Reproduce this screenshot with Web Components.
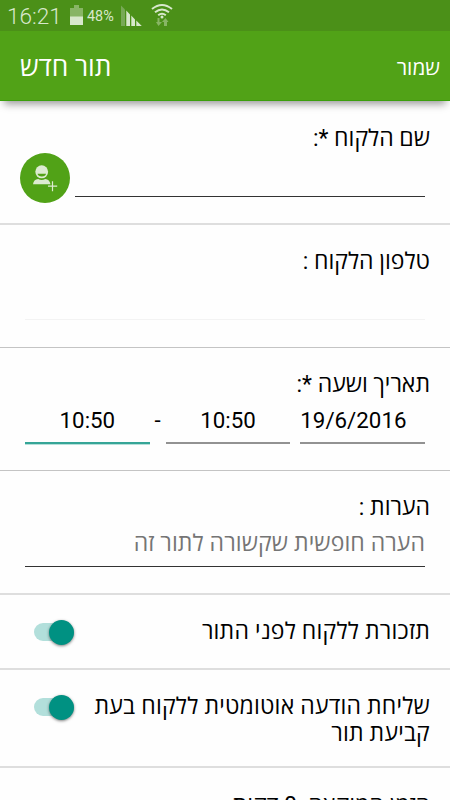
<!DOCTYPE html>
<html lang="he">
<head>
<meta charset="utf-8">
<title>תור חדש</title>
<style>
    body {
        margin: 0;
        width: 450px;
        height: 800px;
        overflow: hidden;
        background: #fefefe;
        color: #000;
        font-family: Roboto, "Open Sans", "Noto Sans", sans-serif;
        font-size: 23px;
    }
</style>
</head>
<body>
<appointment-form></appointment-form>
<script>
class StatusBar extends HTMLElement {
    constructor() {
        super();
        this.attachShadow({mode: 'open'}).innerHTML = `
        <style>
            :host {
                display: flex;
                align-items: center;
                height: 31px;
                padding-left: 7px;
                background: #4b9018;
                color: #d8e8cc;
            }
            .time { width: 63px; font-size: 22.600px; font-weight: 300; line-height: 31px; padding-top: 2px; }
            .percent { width: 34px; font-size: 14.400px; line-height: 33px; padding-top: 1px; }
            svg { display: block; }
            .battery { margin-right: 4px; }
            .wifi { margin-left: 9px; }
        </style>
        <span class="time">16:21</span>
        <svg class="battery" width="13" height="31" viewBox="0 0 13 31">
            <path d="M0 8h4V5h5v3h4v9H0z" fill="#88b565"/>
            <path d="M0 16.500h13V25H0z" fill="#d8e8cc"/>
        </svg>
        <span class="percent">48%</span>
        <svg width="21" height="31" viewBox="0 0 21 31">
            <path d="M0 5.500l4 4V26H0z" fill="#78a956"/>
            <path d="M5.300 10.500l3.700 4V26H5.300zM10.300 15.500l3.700 4V26h-3.700zM15.300 20.500l5.500 5.500h-5.500z" fill="#d8e8cc"/>
        </svg>
        <svg class="wifi" width="22" height="31" viewBox="0 0 22 31" fill="none" stroke="#d8e8cc" stroke-width="2">
            <path d="M1 9q10-8 20 0M4 12.300q7-5.500 14 0M7.200 15.300q3.800-3 7.600 0"/>
            <circle cx="11" cy="17" r="1.500" fill="#d8e8cc" stroke="none"/>
            <path d="M8.500 18v4H11l-3.500 4L5 22h1.500v-4zM13 26v-4h-2l3.500-4 3 4H16v4z" fill="#88b565" stroke="none"/>
        </svg>`;
    }
}

class ActionBar extends HTMLElement {
    constructor() {
        super();
        this.attachShadow({mode: 'open'}).innerHTML = `
        <style>
            :host {
                display: flex;
                justify-content: space-between;
                align-items: center;
                box-sizing: border-box;
                height: 70px;
                padding: 0 10px 0 20px;
                background: #51a217;
                border-bottom: 1px solid #3b9f0c;
                box-shadow: 0 7px 8px -4px rgba(0, 0, 0, .4);
                color: #fff;
                font-size: 26.300px;
            }
            .action { font-size: 20.800px; padding-top: 2px; }
        </style>
        <span dir="rtl"><slot></slot></span>
        <span class="action" dir="rtl"><slot name="action"></slot></span>`;
    }
}

class FormRow extends HTMLElement {
    constructor() {
        super();
        this.attachShadow({mode: 'open'}).innerHTML = `
        <style>
            :host {
                display: block;
                box-sizing: border-box;
                height: var(--row-height, 124px);
                padding: var(--row-top, 23px) 20px 0;
                border-bottom: 2px solid #dedede;
            }
            :host([thin]) { border-bottom: 1px solid #c4c4c4; }
            .label { line-height: 28px; }
        </style>
        <div class="label" dir="rtl">${this.getAttribute('label')}</div>
        <slot></slot>`;
    }
}

class TextField extends HTMLElement {
    constructor() {
        super();
        this.attachShadow({mode: 'open'}).innerHTML = `
        <style>
            :host {
                display: block;
                box-sizing: border-box;
                height: 44px;
                line-height: 27px;
                border-bottom: 1px solid var(--line, #333);
            }
        </style>
        <slot></slot>`;
    }
}

class ContactButton extends HTMLElement {
    constructor() {
        super();
        this.attachShadow({mode: 'open'}).innerHTML = `
        <style>
            :host { display: block; width: 50px; height: 50px; }
            svg { display: block; }
        </style>
        <svg width="50" height="50" viewBox="0 0 50 50">
            <circle cx="25" cy="25" r="25" fill="#51a217"/>
            <ellipse cx="21.700" cy="18.800" rx="6.400" ry="6.500" fill="#dcebd1"/>
            <path d="M17.500 20.800h8.500q-.5 2.700-4.200 2.700t-4.300-2.700z" fill="#51a217"/>
            <path d="M13 31.300q.5-4.800 5.200-5.300 3.500 1.800 7 0 4.500.5 5.300 5.300z" fill="#dcebd1"/>
            <path d="M32.500 28.200v10M28 33.200h9.200" stroke="#dcebd1" stroke-width="1.200"/>
        </svg>`;
    }
}

class ToggleSwitch extends HTMLElement {
    constructor() {
        super();
        this.attachShadow({mode: 'open'}).innerHTML = `
        <style>
            :host {
                display: flex;
                align-items: center;
                justify-content: flex-end;
                flex: none;
                width: 40px;
                height: 18px;
                border-radius: 9px;
                background: #b2dfdb;
            }
            .thumb {
                width: 25px;
                height: 25px;
                border-radius: 50%;
                background: #009182;
                box-shadow: 0 1px 3px rgba(0, 0, 0, .5);
            }
        </style>
        <div class="thumb"></div>`;
    }
}

class SwitchRow extends HTMLElement {
    constructor() {
        super();
        this.attachShadow({mode: 'open'}).innerHTML = `
        <style>
            :host {
                display: flex;
                justify-content: space-between;
                align-items: flex-start;
                box-sizing: border-box;
                height: var(--row-height, 75px);
                padding: 23px 20px 0 34px;
                border-bottom: 2px solid #dedede;
                line-height: 27px;
            }
            toggle-switch { margin-top: 5px; }
            .label { width: 342px; letter-spacing: .2px; }
        </style>
        <toggle-switch></toggle-switch>
        <div class="label" dir="rtl"><slot></slot></div>`;
    }
}

class AppointmentForm extends HTMLElement {
    constructor() {
        super();
        this.attachShadow({mode: 'open'}).innerHTML = `
        <style>
            :host { display: block; height: 800px; overflow: hidden; }
            action-bar { position: relative; }
            .name { display: flex; gap: 5px; margin-right: 5px; }
            .name text-field { flex: 1; }
            .phone { margin: 0 5px; --line: #f3f3f3; }
            .times { display: flex; margin: 0 5px; font-size: 22.300px; }
            .times text-field { width: 125px; height: 45px; padding-top: 8px; border-width: 2px; text-align: center; --line: #929292; }
            .times .active { --line: #35a597; box-shadow: 0 1px #b5e0da; }
            .dash { width: 16px; padding-top: 8px; text-align: center; line-height: 27px; }
            .times .date { margin-left: 10px; text-align: left; }
            .notes { height: 45px; margin: 0 5px; padding-top: 8px; color: #757575; letter-spacing: .1px; }
        </style>
        <status-bar></status-bar>
        <action-bar>תור חדש<span slot="action">שמור</span></action-bar>
        <form-row label="שם הלקוח *:" style="--row-top: 24px">
            <div class="name">
                <contact-button></contact-button>
                <text-field></text-field>
            </div>
        </form-row>
        <form-row label="טלפון הלקוח :" style="--row-height: 123px" thin>
            <text-field class="phone"></text-field>
        </form-row>
        <form-row label="תאריך ושעה *:" style="--row-height: 123px" thin>
            <div class="times">
                <text-field class="active">10:50</text-field>
                <span class="dash">-</span>
                <text-field>10:50</text-field>
                <text-field class="date">19/6/2016</text-field>
            </div>
        </form-row>
        <form-row label="הערות :">
            <text-field class="notes" dir="rtl">הערה חופשית שקשורה לתור זה</text-field>
        </form-row>
        <switch-row>תזכורת ללקוח לפני התור</switch-row>
        <switch-row style="--row-height: 98px">שליחת הודעה אוטומטית ללקוח בעת קביעת תור</switch-row>
        <form-row label="הזמן המוקצה :0 דקות" style="--row-top: 24px"></form-row>`;
    }
}

customElements.define('status-bar', StatusBar);
customElements.define('action-bar', ActionBar);
customElements.define('form-row', FormRow);
customElements.define('text-field', TextField);
customElements.define('contact-button', ContactButton);
customElements.define('toggle-switch', ToggleSwitch);
customElements.define('switch-row', SwitchRow);
customElements.define('appointment-form', AppointmentForm);
</script>
</body>
</html>
